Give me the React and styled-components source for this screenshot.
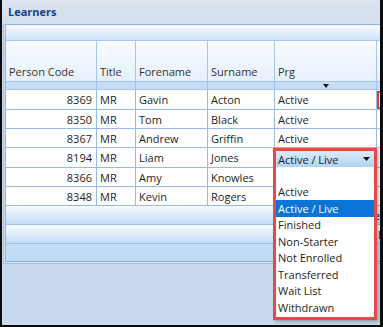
import React from "react";
import styled, { createGlobalStyle } from "styled-components";

const GlobalStyle = createGlobalStyle`
  html, body { margin: 0; padding: 0; background: #ffffff; }
  body { font-family: "Open Sans", "Noto Sans", Arial, sans-serif; }
  * { box-sizing: border-box; }
`;

const COLS = "91px 39px 72px 67px 102px 90px";
const LINE = "#98bae6";

const Frame = styled.div`
  position: relative;
  width: 383px;
  height: 327px;
  overflow: hidden;
  border-left: 2px solid #0d0d0d;
  border-right: 3px solid #0d0d0d;
  border-bottom: 2px solid #0d0d0d;
  background: #c8d9ee;
  display: flex;
  flex-direction: column;
  font-size: 11px;
  color: #222;
`;

const TitleBar = styled.div`
  height: 24px;
  flex: none;
  display: flex;
  align-items: center;
  padding-left: 6px;
  padding-bottom: 2px;
  background: linear-gradient(#dbe4ef, #d2deec);
  color: #15428b;
  font-weight: 700;
  font-size: 11px;
`;

const Panel = styled.div`
  margin-left: 1px;
  border-left: 1px solid #a6c1e4;
  border-bottom: 1px solid #a6c1e4;
  padding: 0 0 1px 1px;
  background: #d6e3f3;
`;

const Grid = styled.div`
  border: 1px solid #8db2e2;
  border-right: none;
  overflow: hidden;
  background: #fff;
`;

const GroupBand = styled.div`
  height: 16px;
  border-bottom: 1px solid #a9c7ec;
  background: linear-gradient(#f3f8ff, #d2e4f9);
`;

const Row = styled.div`
  display: grid;
  grid-template-columns: ${COLS};
  height: ${(p) => p.$h}px;
  border-bottom: 1px solid ${(p) => p.$line || LINE};
  background: ${(p) => p.$bg || "#fff"};
`;

const HeadCell = styled.div`
  border-right: 1px solid #a8c6ec;
  display: flex;
  align-items: flex-end;
  padding: 0 3px 2px;
  color: #333;
  white-space: nowrap;
`;

const FilterCell = styled.div`
  border-right: 1px solid #a8c6ec;
  display: flex;
  align-items: center;
  justify-content: center;
`;

const Cell = styled.div`
  border-right: 1px solid ${LINE};
  display: flex;
  align-items: center;
  justify-content: ${(p) => (p.$right ? "flex-end" : "flex-start")};
  padding: 0 ${(p) => (p.$right ? "4px" : "3px")} 0 3px;
  white-space: nowrap;
  color: #1e1e1e;
`;

const Band = styled.div`
  height: ${(p) => p.$h}px;
  border-bottom: 1px solid ${(p) => (p.$last ? "transparent" : "#9fc0e8")};
  background: ${(p) =>
    p.$flat ? "#c2dbf7" : "linear-gradient(#f8fbff, #c4dcf8)"};
  display: ${(p) => (p.$cols ? "grid" : "flex")};
  grid-template-columns: ${COLS};
  justify-content: ${(p) => (p.$cols ? "start" : "flex-end")};
  align-items: center;
  color: #222;
  white-space: nowrap;
`;

const BandText = styled.span`
  grid-column: 6;
  padding-left: 1px;
`;

const Marker = styled.div`
  position: absolute;
  left: 375px;
  top: 91px;
  width: 24px;
  height: 18px;
  border: 2px solid #e03c3f;
`;

const Dropdown = styled.div`
  position: absolute;
  left: 271px;
  top: 148px;
  width: 104px;
  height: 172px;
  border: 3px solid #e5494c;
  background: #fff;
  box-shadow: 2px 2px 3px rgba(0, 0, 0, 0.25);
  display: flex;
  flex-direction: column;
`;

const Combo = styled.div`
  height: 16px;
  flex: none;
  display: flex;
  align-items: center;
  justify-content: space-between;
  padding: 0 4px 0 2px;
  background: linear-gradient(#dcecfb, #afd3f1);
  color: #1a1a1a;
`;

const Item = styled.div`
  height: 16.5px;
  display: flex;
  align-items: center;
  padding-left: 2px;
  background: ${(p) => (p.$sel ? "#0a75d6" : "transparent")};
  color: ${(p) => (p.$sel ? "#fff" : "#1e1e1e")};
  white-space: nowrap;
`;

const Arrow = ({ w = 7, h = 4 }) => (
  <svg width={w} height={h} viewBox={`0 0 ${w} ${h}`}>
    <polygon points={`0,0 ${w},0 ${w / 2},${h}`} fill="#111" />
  </svg>
);

const rows = [
  ["8369", "MR", "Gavin", "Acton", "Active"],
  ["8350", "MR", "Tom", "Black", "Active"],
  ["8367", "MR", "Andrew", "Griffin", "Active"],
  ["8194", "MR", "Liam", "Jones", ""],
  ["8366", "MR", "Amy", "Knowles", ""],
  ["8348", "MR", "Kevin", "Rogers", ""],
];

const options = [
  "",
  "Active",
  "Active / Live",
  "Finished",
  "Non-Starter",
  "Not Enrolled",
  "Transferred",
  "Wait List",
  "Withdrawn",
];

const rowHeights = [20, 19, 19, 20, 19, 19];

export default function App() {
  return (
    <>
      <GlobalStyle />
      <Frame>
        <TitleBar>Learners</TitleBar>
        <Panel>
          <Grid>
            <GroupBand />
            <Row $h={41} $bg="linear-gradient(#f8fbff, #e6f0fb)" $line="#a8c6ec">
              <HeadCell>Person Code</HeadCell>
              <HeadCell>Title</HeadCell>
              <HeadCell>Forename</HeadCell>
              <HeadCell>Surname</HeadCell>
              <HeadCell>Prg</HeadCell>
              <HeadCell />
            </Row>
            <Row $h={8} $bg="#c7ddf6" $line="#a3c3ea">
              <FilterCell />
              <FilterCell />
              <FilterCell />
              <FilterCell />
              <FilterCell>
                <Arrow w={6} h={4} />
              </FilterCell>
              <FilterCell />
            </Row>
            {rows.map((r, i) => (
              <Row key={r[0]} $h={rowHeights[i]}>
                <Cell $right>{r[0]}</Cell>
                <Cell>{r[1]}</Cell>
                <Cell>{r[2]}</Cell>
                <Cell>{r[3]}</Cell>
                <Cell>{r[4]}</Cell>
                <Cell />
              </Row>
            ))}
            <Band $h={19}>Close</Band>
            <Band $h={19} $cols>
              <BandText>Delete</BandText>
            </Band>
            <Band $h={17} $flat $last />
          </Grid>
        </Panel>
        <Marker />
        <Dropdown>
          <Combo>
            <span>Active / Live</span>
            <Arrow w={7} h={4} />
          </Combo>
          {options.map((o, i) => (
            <Item key={i} $sel={o === "Active / Live"}>
              {o}
            </Item>
          ))}
        </Dropdown>
      </Frame>
    </>
  );
}
